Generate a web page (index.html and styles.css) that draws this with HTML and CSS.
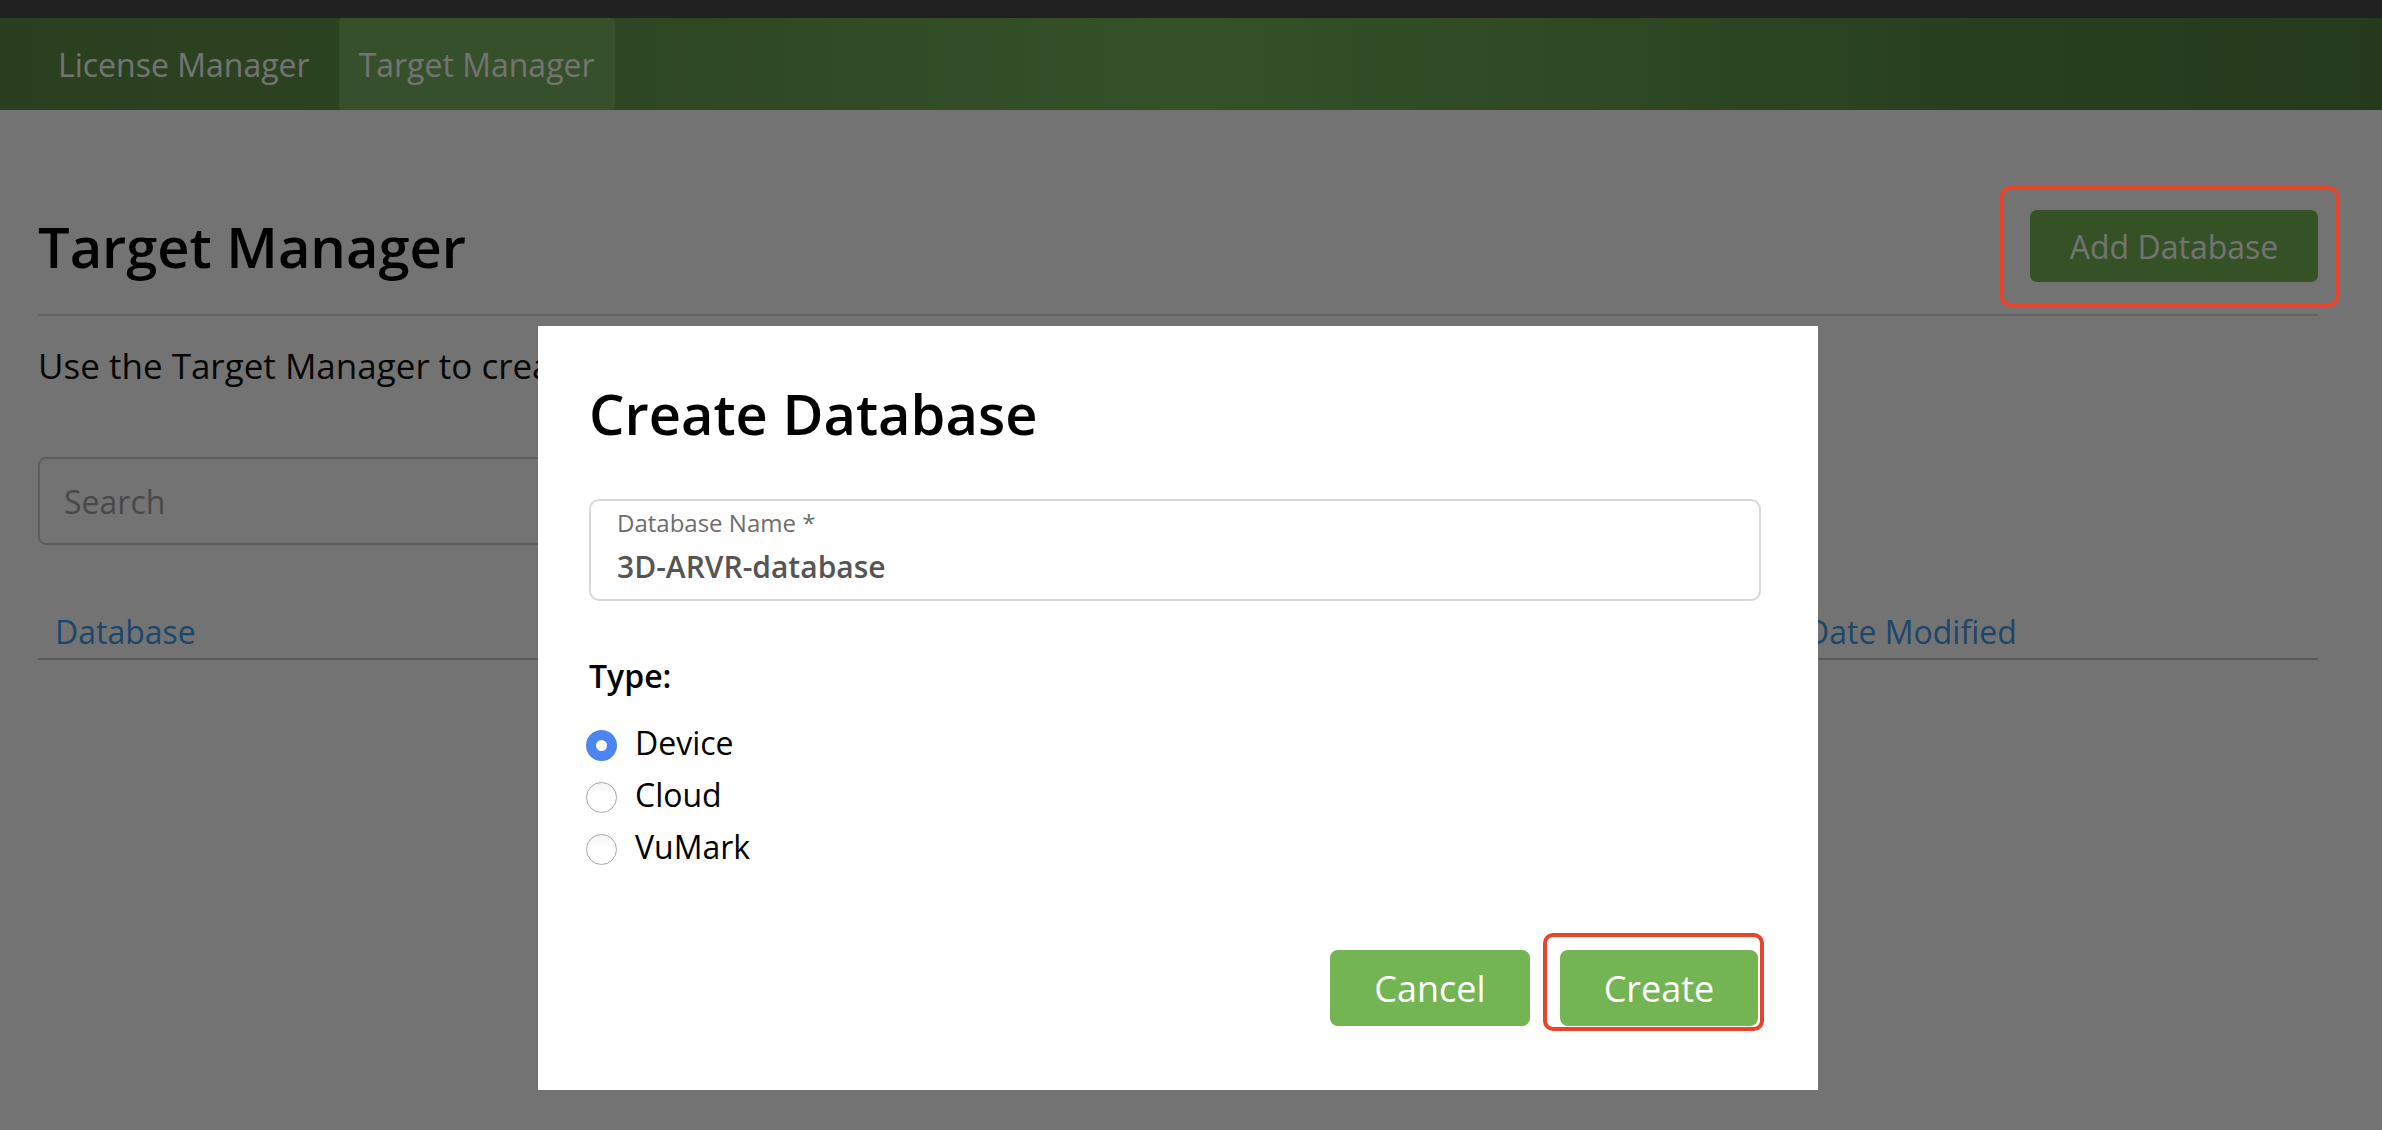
FILE: index.html
```html
<!DOCTYPE html>
<html lang="en">
<head>
<meta charset="utf-8">
<title>Target Manager</title>
<link rel="stylesheet" href="styles.css">
</head>
<body>
  <div class="topbar"></div>
  <nav class="nav">
    <a class="nav-item">License Manager</a>
    <a class="nav-item active">Target Manager</a>
  </nav>

  <main class="content">
    <header class="page-head">
      <h1 class="page-title">Target Manager</h1>
      <button class="btn btn-add">Add Database</button>
    </header>
    <p class="intro">Use the Target Manager to create and manage databases and targets.</p>
    <div class="search">Search</div>
    <div class="table-head">
      <span class="th">Database</span>
      <span class="th">Type</span>
      <span class="th">Targets</span>
      <span class="th">Date Modified</span>
    </div>
  </main>

  <div class="overlay"></div>

  <section class="modal">
    <h2 class="modal-title">Create Database</h2>
    <div class="field">
      <span class="field-label">Database Name *</span>
      <div class="field-value">3D-ARVR-database</div>
    </div>
    <div class="type-label">Type:</div>
    <div class="radios">
      <div class="radio-row"><span class="radio checked"></span><span class="radio-text">Device</span></div>
      <div class="radio-row"><span class="radio"></span><span class="radio-text">Cloud</span></div>
      <div class="radio-row"><span class="radio"></span><span class="radio-text">VuMark</span></div>
    </div>
    <div class="actions">
      <button class="btn btn-modal btn-cancel">Cancel</button>
      <button class="btn btn-modal btn-create">Create</button>
    </div>
  </section>
</body>
</html>
```

FILE: styles.css
```css
html, body {
  margin: 0;
  padding: 0;
}
body {
  width: 2382px;
  height: 1130px;
  overflow: hidden;
  background: #ffffff;
  font-family: "Open Sans", "Liberation Sans", sans-serif;
  color: #111;
}

.topbar {
  height: 18px;
  background: #494949;
}

.nav {
  height: 92px;
  display: flex;
  gap: 9px;
  padding-left: 38px;
  background: linear-gradient(90deg, #5e8d46 0%, #63954a 20%, #6ea956 38%, #74b45d 50%, #65a04f 68%, #578a45 85%, #538241 100%);
}
.nav-item {
  display: flex;
  align-items: center;
  padding: 0 20px;
  font-size: 32px;
  color: #ffffff;
  text-decoration: none;
  border-radius: 4px;
}
.nav-item.active {
  background: #76b25e;
}

.content {
  padding: 98px 64px 0 38px;
}

.page-head {
  display: flex;
  justify-content: space-between;
  align-items: center;
  padding-bottom: 30px;
  border-bottom: 2px solid #dedede;
}
.page-title {
  margin: 0;
  font-size: 56px;
  font-weight: 600;
  line-height: 76px;
  color: #000;
}

.btn {
  font-family: "Open Sans", "Liberation Sans", sans-serif;
  border: none;
  background: #74b553;
  color: #ffffff;
  cursor: pointer;
  padding: 0;
}
.btn-add {
  position: relative;
  width: 288px;
  height: 72px;
  font-size: 32px;
  border-radius: 7px;
}
.btn-add::after {
  content: "";
  position: absolute;
  left: -30px;
  top: -24px;
  right: -21px;
  bottom: -25px;
  border: 4px solid #e8442c;
  border-radius: 10px;
  z-index: 20;
}

.intro {
  margin: 26px 0 0;
  font-size: 35px;
  line-height: 48px;
  color: #111;
}

.search {
  margin-top: 67px;
  width: 1000px;
  height: 88px;
  box-sizing: border-box;
  border: 2px solid #cfcfcf;
  border-radius: 8px;
  padding-left: 24px;
  display: flex;
  align-items: center;
  font-size: 32px;
  color: #a3a3a3;
}

.table-head {
  margin-top: 65px;
  display: grid;
  grid-template-columns: 1fr 1fr 1fr 529px;
  padding-bottom: 4px;
  border-bottom: 2px solid #c8c8c8;
}
.th {
  padding-left: 17px;
  font-size: 32px;
  line-height: 44px;
  color: #3f9ded;
}

.overlay {
  position: fixed;
  inset: 0;
  background: rgba(0, 0, 0, 0.55);
  z-index: 10;
}

.modal {
  position: absolute;
  left: 538px;
  top: 326px;
  width: 1280px;
  height: 764px;
  box-sizing: border-box;
  padding: 48px 57px 0 51px;
  background: #ffffff;
  z-index: 11;
  display: flex;
  flex-direction: column;
}
.modal-title {
  margin: 0;
  font-size: 56px;
  font-weight: 600;
  line-height: 78px;
  color: #000;
}

.field {
  margin-top: 47px;
  height: 102px;
  box-sizing: border-box;
  border: 2px solid #d4d9dd;
  border-radius: 10px;
  padding: 5px 26px 0;
}
.field-label {
  display: block;
  font-size: 24px;
  line-height: 33px;
  color: #6d6d6d;
}
.field-value {
  margin-top: 9px;
  font-size: 30px;
  font-weight: 600;
  line-height: 38px;
  color: #555555;
}

.type-label {
  margin-top: 53px;
  font-size: 32px;
  font-weight: 600;
  line-height: 43px;
  color: #000;
}

.radios {
  margin-top: 22px;
  display: flex;
  flex-direction: column;
}
.radio-row {
  height: 52px;
  display: flex;
  align-items: center;
  gap: 18px;
}
.radio {
  margin-left: -3px;
  width: 31px;
  height: 31px;
  box-sizing: border-box;
  border-radius: 50%;
  border: 1.5px solid #a9a9a9;
  background: linear-gradient(180deg, #f4f4f4 0%, #ffffff 40%);
  box-shadow: 0 -1px 2px rgba(0, 0, 0, 0.06);
  position: relative;
}
.radio.checked {
  border: none;
  background: #4c85f0;
  box-shadow: none;
}
.radio.checked::after {
  content: "";
  position: absolute;
  left: 10px;
  top: 10px;
  width: 11px;
  height: 11px;
  border-radius: 50%;
  background: #ffffff;
}
.radio-text {
  font-size: 32px;
  line-height: 43px;
  padding-bottom: 6px;
  color: #000;
}

.actions {
  margin-top: 75px;
  display: flex;
  justify-content: flex-end;
  gap: 30px;
  padding-right: 3px;
}
.btn-modal {
  height: 76px;
  font-size: 36px;
  border-radius: 8px;
}
.btn-cancel {
  width: 200px;
}
.btn-create {
  position: relative;
  width: 198px;
}
.btn-create::after {
  content: "";
  position: absolute;
  left: -17px;
  top: -17px;
  right: -6px;
  bottom: -5px;
  border: 4px solid #e8442c;
  border-radius: 10px;
}
```
